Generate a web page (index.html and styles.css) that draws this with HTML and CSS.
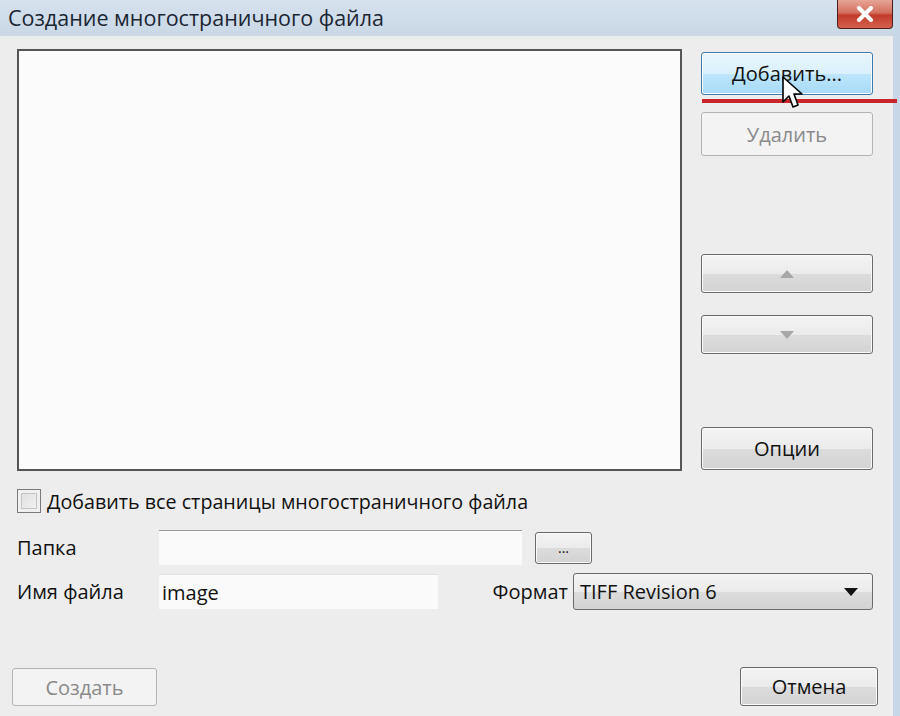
FILE: index.html
```html
<!DOCTYPE html>
<html lang="ru">
<head>
    <meta charset="UTF-8">
    <title>Создание многостраничного файла</title>
    <link rel="stylesheet" href="styles.css">
</head>
<body>
    <div class="window">
        <div class="titlebar">
            <span class="title">Создание многостраничного файла</span>
            <button class="close">
                <svg width="20" height="16" viewBox="0 0 20 16"><path d="M4 2 L16 14 M16 2 L4 14" stroke="#fff" stroke-width="4" stroke-linecap="round"/></svg>
            </button>
        </div>

        <div class="content">
            <div class="top">
                <div class="list"></div>
                <div class="side">
                    <button class="btn hot">Добавить...</button>
                    <button class="btn disabled delete">Удалить</button>
                    <button class="btn arrow up">
                        <svg width="16" height="10" viewBox="0 0 16 10"><path d="M8 1 L15 9 L1 9 Z" fill="#a8a8a8"/></svg>
                    </button>
                    <button class="btn arrow down">
                        <svg width="16" height="10" viewBox="0 0 16 10"><path d="M1 1 L15 1 L8 9 Z" fill="#a8a8a8"/></svg>
                    </button>
                    <button class="btn options">Опции</button>
                </div>
            </div>

            <label class="check"><span class="box"></span>Добавить все страницы многостраничного файла</label>

            <div class="row folder">
                <span class="label">Папка</span>
                <div class="field wide"></div>
                <button class="btn browse">...</button>
            </div>

            <div class="row name">
                <span class="label">Имя файла</span>
                <div class="field short">image</div>
                <span class="format-label">Формат</span>
                <div class="select">
                    <span>TIFF Revision 6</span>
                    <svg width="14" height="8" viewBox="0 0 14 8"><path d="M0 0 L14 0 L7 8 Z" fill="#111"/></svg>
                </div>
            </div>
        </div>

        <div class="footer">
            <button class="btn disabled create">Создать</button>
            <button class="btn cancel">Отмена</button>
        </div>

        <div class="marker"></div>
        <svg class="cursor" width="26" height="36" viewBox="0 0 26 36">
            <path d="M2 1 L2 26 L8 20 L12 31 L17 29 L13 18 L21 18 Z" fill="#fff" stroke="#000" stroke-width="1.6" stroke-linejoin="round"/>
        </svg>
    </div>
</body>
</html>
```

FILE: styles.css
```css
body {
    margin: 0;
    font-family: "Open Sans", "Noto Sans", sans-serif;
    background: #ececec;
    overflow: hidden;
}
.window {
    position: relative;
    width: 893px;
    height: 716px;
    border-right: 7px solid #c7d7e8;
    background: #ededed;
    display: flex;
    flex-direction: column;
}
.titlebar {
    height: 36px;
    display: flex;
    justify-content: space-between;
    align-items: flex-start;
    background: linear-gradient(#d5e1ed, #cad8e6);
}
.title {
    margin: 3px 0 0 8px;
    font-size: 21.5px;
    color: #1b2633;
}
.close {
    width: 56px;
    height: 29px;
    margin: 0;
    padding: 0;
    border: 1px solid #4a2020;
    border-top: none;
    border-radius: 0 0 4px 4px;
    background: linear-gradient(#e6a596 0%, #d4705f 45%, #c23b2b 55%, #d6604d 100%);
    display: flex;
    align-items: center;
    justify-content: center;
}
.content {
    padding-left: 17px;
    padding-right: 20px;
}
.top {
    display: flex;
    margin-top: 13px;
}
.list {
    width: 661px;
    height: 418px;
    border: 2px solid #555;
    background: #fbfbfb;
}
.side {
    margin-left: 19px;
    width: 172px;
    display: flex;
    flex-direction: column;
}
.btn {
    font-family: inherit;
    font-size: 20px;
    color: #111;
    border: 1px solid #6b6b6b;
    border-radius: 3px;
    background: linear-gradient(#f4f4f4 0%, #ebebeb 50%, #dcdcdc 51%, #d3d3d3 100%);
    padding: 0;
    box-shadow: inset 0 0 0 1px #fafafa;
}
.btn.hot {
    margin-top: 3px;
    height: 43px;
    border-color: #3d7bad;
    background: linear-gradient(#eaf6fd 0%, #d9f0fc 50%, #bee6fd 51%, #a7d9f5 100%);
}
.btn.disabled {
    color: #8a8a8a;
    border-color: #b4b4b4;
    background: #f3f3f3;
    box-shadow: none;
}
.btn.delete {
    margin-top: 17px;
    height: 44px;
}
.btn.arrow {
    height: 39px;
    display: flex;
    align-items: center;
    justify-content: center;
}
.btn.up {
    margin-top: 98px;
}
.btn.down {
    margin-top: 22px;
}
.btn.options {
    margin-top: 73px;
    height: 43px;
}
.check {
    display: flex;
    align-items: center;
    margin-top: 17px;
    height: 26px;
    font-size: 19.7px;
    color: #111;
}
.box {
    width: 22px;
    height: 22px;
    border: 1px solid #7a7a7a;
    background: linear-gradient(135deg, #dcdcdc, #f6f6f6);
    box-shadow: inset 0 0 0 3px #f0f0f0, inset 0 0 0 4px #c4c4c4;
    margin-right: 6px;
}
.row {
    display: flex;
    align-items: center;
    font-size: 20px;
    color: #111;
}
.row.folder {
    margin-top: 16px;
}
.row.name {
    margin-top: 8px;
}
.label {
    width: 142px;
}
.field {
    height: 35px;
    background: #fafafa;
    border-top: 1px solid #9a9a9a;
    box-sizing: border-box;
    padding-left: 3px;
    display: flex;
    align-items: center;
}
.field.wide {
    width: 363px;
}
.field.short {
    width: 279px;
    border-top-color: #e2e2e2;
}
.btn.browse {
    margin-left: 13px;
    width: 57px;
    height: 32px;
    font-size: 14px;
    line-height: 30px;
}
.format-label {
    margin-left: auto;
    margin-right: 5px;
}
.select {
    width: 300px;
    height: 37px;
    box-sizing: border-box;
    border: 1px solid #6b6b6b;
    border-radius: 3px;
    background: linear-gradient(#f4f4f4 0%, #ebebeb 50%, #dcdcdc 51%, #d3d3d3 100%);
    display: flex;
    align-items: center;
    justify-content: space-between;
    padding: 0 14px 0 6px;
}
.footer {
    display: flex;
    justify-content: space-between;
    margin-top: 57px;
    padding: 0 15px 0 12px;
}
.btn.create {
    width: 145px;
    height: 38px;
    margin-top: 1px;
}
.btn.cancel {
    width: 138px;
    height: 39px;
}
.marker {
    position: absolute;
    left: 702px;
    top: 99px;
    width: 195px;
    height: 4px;
    background: #c8262b;
}
.cursor {
    position: absolute;
    left: 781px;
    top: 76px;
}
```
